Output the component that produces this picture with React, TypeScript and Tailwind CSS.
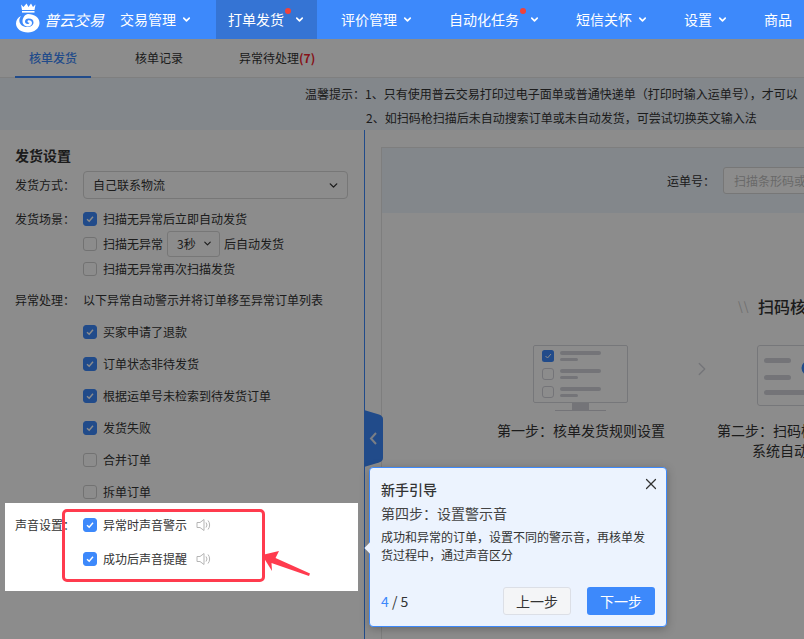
import React from 'react';
import { ChevronDown, ChevronRight, X } from 'lucide-react';

const cjk = { fontFamily: '"Noto Sans CJK SC", "Noto Sans", sans-serif' };

const NavItem: React.FC<{ label: string; dot?: boolean; active?: boolean; noArrow?: boolean }> = ({ label, dot, active, noArrow }) => (
  <div className={`relative flex h-[39px] items-center px-3 text-[14px] text-white ${active ? 'bg-[#3574d4]' : ''}`}>
    <span className="whitespace-nowrap">{label}</span>
    {dot && <span className="ml-px mb-[18px] h-[6px] w-[6px] rounded-full bg-[#f0433c]"></span>}
    {!noArrow && <ChevronDown size={11} strokeWidth={3.5} className={dot ? 'ml-[3px]' : 'ml-[5px]'} />}
    {!noArrow && !dot && <span className="w-[0px]"></span>}
  </div>
);

const Check: React.FC<{ on?: boolean }> = ({ on }) => (
  <span className={`flex h-[14px] w-[14px] shrink-0 items-center justify-center rounded-[3px] border ${on ? 'border-[#3d89fb] bg-[#3d89fb]' : 'border-[#d0d0d0] bg-white'}`}>
    {on && (
      <svg width="8" height="8" viewBox="0 0 8 8" fill="none" stroke="white" strokeWidth="1.4">
        <path d="M1 4.2 3.2 6.3 7 1.8" />
      </svg>
    )}
  </span>
);

const Speaker = () => (
  <svg width="16" height="16" viewBox="0 0 16 16" fill="none" stroke="#b5b5b5" strokeWidth="1" className="ml-[9px]">
    <path d="M1 5.5h3L8 2.5v11l-4-3H1z" />
    <path d="M10 5.5a4 4 0 0 1 0 5" />
    <path d="M12 3.5a7 7 0 0 1 0 9" />
  </svg>
);

const CheckRow: React.FC<{ on?: boolean; label: string }> = ({ on, label }) => (
  <div className="flex h-[32px] items-center pl-[68px] text-[12px] text-[#333]">
    <Check on={on} />
    <span className="ml-[6px]">{label}</span>
  </div>
);

const Logo = () => (
  <div className="flex w-[122px] items-center pl-[15px]">
    <svg width="26" height="30" viewBox="0 0 26 30" className="shrink-0 -mt-[3px]">
      <path d="M6 1.5 8.5 4 11.5.5 13.5 4 16 .5 18 4 20.5 1.5 19.5 7H7z" fill="white" />
      <rect x="7" y="8" width="12.5" height="1.6" fill="white" />
      <path d="M13 11c6.5 0 11.5 3.5 11.5 9 0 5.500-5.500 9.500-11.500 9.500C6 29.500 1 25.500 1 20.500 1 17 3 14.500 6 13c-1.500 2-2 4-1.500 6 .8 3 4 5 8 5 3.500 0 6-2 6-4.500S17 15.500 13.500 15.500c-2 0-3.500 1.300-3.500 3 0 1.400 1 2.500 2.500 2.500 1 0 1.800-.5 2-1.500-1 .5-2 0-2-1 0-.8.700-1.300 1.500-1.300 1.800 0 3 1.200 3 2.800 0 2-1.800 3.500-4 3.500-3 0-5.500-2.200-5.500-5 0-3.800 2.800-7.500 5.500-7.500z" fill="white" />
    </svg>
    <span className="ml-[3px] whitespace-nowrap text-[15px] italic leading-none text-white">普云交易</span>
  </div>
);

const MonitorOne = () => (
  <svg width="96" height="67" viewBox="0 0 96 67" fill="none">
    <rect x="0.500" y="0.500" width="94" height="57" rx="1.500" stroke="#d8d9de" />
    <rect x="39" y="58" width="17" height="7" fill="#d3d4db" />
    <rect x="22" y="65" width="51" height="1" fill="#d3d4db" />
    <rect x="9" y="5" width="12" height="12" rx="2.500" fill="#3d89fb" />
    <path d="M12.500 11 14.500 13 18 9" stroke="white" strokeWidth="1" />
    <rect x="9.500" y="23.500" width="11" height="11" rx="2.500" stroke="#d3d4db" />
    <rect x="9.500" y="41.500" width="11" height="11" rx="2.500" stroke="#d3d4db" />
    <rect x="27" y="6" width="41" height="4" rx="2" fill="#d3d4db" />
    <rect x="27" y="13" width="18" height="3" rx="1.500" fill="#d3d4db" />
    <rect x="27" y="24" width="41" height="4" rx="2" fill="#d3d4db" />
    <rect x="27" y="31" width="18" height="3" rx="1.500" fill="#d3d4db" />
    <rect x="27" y="42" width="41" height="4" rx="2" fill="#d3d4db" />
    <rect x="27" y="49" width="18" height="3" rx="1.500" fill="#d3d4db" />
  </svg>
);

const MonitorTwo = () => (
  <svg width="102" height="61" viewBox="0 0 102 61" fill="none">
    <rect x="0.500" y="0.500" width="101" height="60" rx="2.500" stroke="#d8d9de" />
    <rect x="7" y="13" width="27" height="5" rx="2.500" fill="#d3d4db" />
    <rect x="7" y="30" width="27" height="5" rx="2.500" fill="#d3d4db" />
    <rect x="7" y="45" width="88" height="5" rx="2.500" fill="#d3d4db" />
    <circle cx="52" cy="23" r="6" stroke="#3d89fb" strokeWidth="3" />
  </svg>
);

export default function App() {
  return (
    <div className="h-[639px] w-[804px] overflow-hidden bg-white" style={cjk}>
      {/* top nav */}
      <div className="flex h-[39px] bg-[#3d89fb]">
        <Logo />
        <div className="flex gap-3">
          <NavItem label="交易管理" />
          <NavItem label="打单发货" dot active />
          <NavItem label="评价管理" />
          <NavItem label="自动化任务" dot />
          <NavItem label="短信关怀" />
          <NavItem label="设置" />
          <NavItem label="商品" noArrow />
        </div>
      </div>

      <div className="relative h-[600px]">
        {/* tabs */}
        <div className="flex h-[39px] border-b border-[#e8e8e8] text-[12px] text-[#333]">
          <div className="ml-[15px] flex w-[76px] items-center justify-center border-b-2 border-[#3d89fb] h-[39px] font-medium text-[#3d89fb]">核单发货</div>
          <div className="ml-[30px] flex w-[76px] items-center justify-center">核单记录</div>
          <div className="ml-[28px] flex items-center px-[14px]">
            异常待处理<b className="text-[#f5222d]">(7)</b>
          </div>
        </div>

        {/* notice */}
        <div className="h-[52px] bg-[#eef6fd] pl-[305px] pt-[4px] text-[12px] leading-[24px] text-[#333] whitespace-nowrap">
          <div>温馨提示：1、只有使用普云交易打印过电子面单或普通快递单（打印时输入运单号），才可以</div>
          <div className="pl-[61px]">2、如扫码枪扫描后未自动搜索订单或未自动发货，可尝试切换英文输入法</div>
        </div>

        <div className="flex h-[509px]">
          {/* left settings */}
          <div className="w-[365px] shrink-0 border-r border-[#3d89fb] pt-[15px] text-[12px] text-[#333]">
            <div className="h-[20px] pl-[15px] text-[14px] font-bold leading-[20px]">发货设置</div>
            <div className="mt-[6px] flex h-[28px] items-center pl-[15px]">
              <span className="w-[68px]">发货方式：</span>
              <div className="flex h-[28px] w-[265px] items-center justify-between rounded-[4px] border border-[#d9d9d9] px-[9px]">
                <span>自己联系物流</span>
                <ChevronDown size={13} strokeWidth={2.5} className="-mr-[2px]" />
              </div>
            </div>
            <div className="mt-[7px] flex pl-[15px]">
              <span className="w-[68px] leading-[25px]">发货场景：</span>
              <div>
                <div className="flex h-[25px] items-center">
                  <Check on />
                  <span className="ml-[6px]">扫描无异常后立即自动发货</span>
                </div>
                <div className="flex h-[25px] items-center">
                  <Check />
                  <span className="ml-[6px]">扫描无异常</span>
                  <div className="ml-[4px] flex h-[26px] w-[53px] items-center justify-between rounded-[3px] border border-[#d9d9d9] pl-[9px] pr-[6px]">
                    <span>3秒</span>
                    <ChevronDown size={11} strokeWidth={2.5} />
                  </div>
                  <span className="ml-[4px]">后自动发货</span>
                </div>
                <div className="flex h-[25px] items-center">
                  <Check />
                  <span className="ml-[6px]">扫描无异常再次扫描发货</span>
                </div>
              </div>
            </div>
            <div className="mt-[9px] flex h-[20px] items-center pl-[15px]">
              <span className="w-[68px]">异常处理：</span>
              <span>以下异常自动警示并将订单移至异常订单列表</span>
            </div>
            <div className="mt-[6px] pl-[15px]">
              <CheckRow on label="买家申请了退款" />
              <CheckRow on label="订单状态非待发货" />
              <CheckRow on label="根据运单号未检索到待发货订单" />
              <CheckRow on label="发货失败" />
              <CheckRow label="合并订单" />
              <CheckRow label="拆单订单" />
            </div>

            {/* highlighted by the guide */}
            <div className="relative z-20 -mt-[5px] ml-[5px] h-[88px] w-[353px] bg-white pl-[10px] pt-[5px]">
              <div className="flex">
                <span className="w-[68px] leading-[34px]">声音设置：</span>
                <div>
                  <div className="flex h-[34px] items-center">
                    <Check on />
                    <span className="ml-[6px]">异常时声音警示</span>
                    <Speaker />
                  </div>
                  <div className="flex h-[34px] items-center">
                    <Check on />
                    <span className="ml-[6px]">成功后声音提醒</span>
                    <Speaker />
                  </div>
                </div>
              </div>
              <div className="absolute left-[57px] top-[6px] h-[73px] w-[203px] rounded-[5px] border-[3px] border-[#ff3b4e]"></div>
              <svg width="60" height="40" viewBox="0 0 60 40" className="absolute left-[252px] top-[43px]">
                <path d="M5 9 22 5 18.500 12 53 27.500 52 30 14.500 17 15 25z" fill="#ff3b4e" />
              </svg>
            </div>
          </div>

          {/* right card */}
          <div className="pl-[16px] pt-[17px]">
            <div className="h-[492px] w-[700px] border-l border-t border-[#e5e5e5] text-[#333]">
              <div className="flex h-[65px] items-center bg-[#eef6fd] pl-[285px] text-[12px]">
                <span className="w-[56px]">运单号：</span>
                <div className="flex h-[27px] w-[260px] items-center rounded-[3px] border border-[#d9d9d9] bg-white pl-[10px] text-[#bfbfbf]">扫描条形码或输入运单号</div>
              </div>
              <div className="mt-[81px] flex h-[24px] items-center pl-[356px]">
                <span className="w-[20px] text-[12px] tracking-[1px] text-[#c8c8c8]">\\</span>
                <span className="text-[16px] font-medium">扫码核单发货</span>
              </div>
              <div className="ml-[115px] mt-[27px] flex text-[14px] leading-[20px]">
                <div className="flex w-[168px] shrink-0 flex-col items-center">
                  <MonitorOne />
                  <div className="mt-[8px] whitespace-nowrap">第一步：核单发货规则设置</div>
                </div>
                <ChevronRight size={22} strokeWidth={1.5} color="#d3d4db" className="ml-[26px] mr-[4px] mt-[13px] shrink-0" />
                <div className="flex w-[182px] shrink-0 flex-col items-center text-center">
                  <MonitorTwo />
                  <div className="mt-[14px] whitespace-nowrap">第二步：扫码枪扫描快递单号</div>
                  <div className="whitespace-nowrap">系统自动核单发货</div>
                </div>
              </div>
            </div>
          </div>
        </div>

        {/* collapse handle */}
        <svg width="19" height="57" viewBox="0 0 19 57" className="absolute left-[364px] top-[371px]">
          <path d="M0 0 15 4.500Q19 6 19 9V48Q19 51 15 52.500L0 57z" fill="#3d89fb" />
          <path d="M12 23 7 28.500 12 34" fill="none" stroke="#dfe6f2" strokeWidth="2" />
        </svg>

        {/* dim layer */}
        <div className="absolute inset-0 z-10 bg-black/45"></div>

        {/* guide popover */}
        <div className="absolute left-[369px] top-[428px] z-30 h-[160px] w-[298px] rounded-[4px] border border-[#3d89fb] bg-[#ecf3fe] px-[11px] pt-[11px] shadow-[0_2px_10px_rgba(0,0,0,0.25)]">
          <span className="absolute -left-[4px] top-[76px] h-[8px] w-[8px] rotate-45 bg-[#ecf3fe]"></span>
          <X size={18} strokeWidth={1.6} color="#333" className="absolute right-[6px] top-[7px]" />
          <div className="text-[14px] font-medium leading-[20px] text-[#333]">新手引导</div>
          <div className="mt-[4px] text-[14px] leading-[20px] text-[#444]">第四步：设置警示音</div>
          <div className="mt-[5px] w-[266px] text-[12px] leading-[18px] text-[#333]">成功和异常的订单，设置不同的警示音，再核单发货过程中，通过声音区分</div>
          <div className="absolute bottom-[11px] left-[11px] right-[11px] flex h-[28px] items-center justify-between">
            <div className="text-[14px] text-[#333]">
              <span className="text-[#3d89fb]">4</span> / 5
            </div>
            <div className="flex gap-4 text-[14px]">
              <div className="flex h-[28px] w-[68px] items-center justify-center rounded-[3px] border border-[#dcdfe6] bg-[#f4f5f7] text-[#333]">上一步</div>
              <div className="flex h-[28px] w-[68px] items-center justify-center rounded-[3px] bg-[#3d89fb] text-white">下一步</div>
            </div>
          </div>
        </div>
      </div>
    </div>
  );
}
